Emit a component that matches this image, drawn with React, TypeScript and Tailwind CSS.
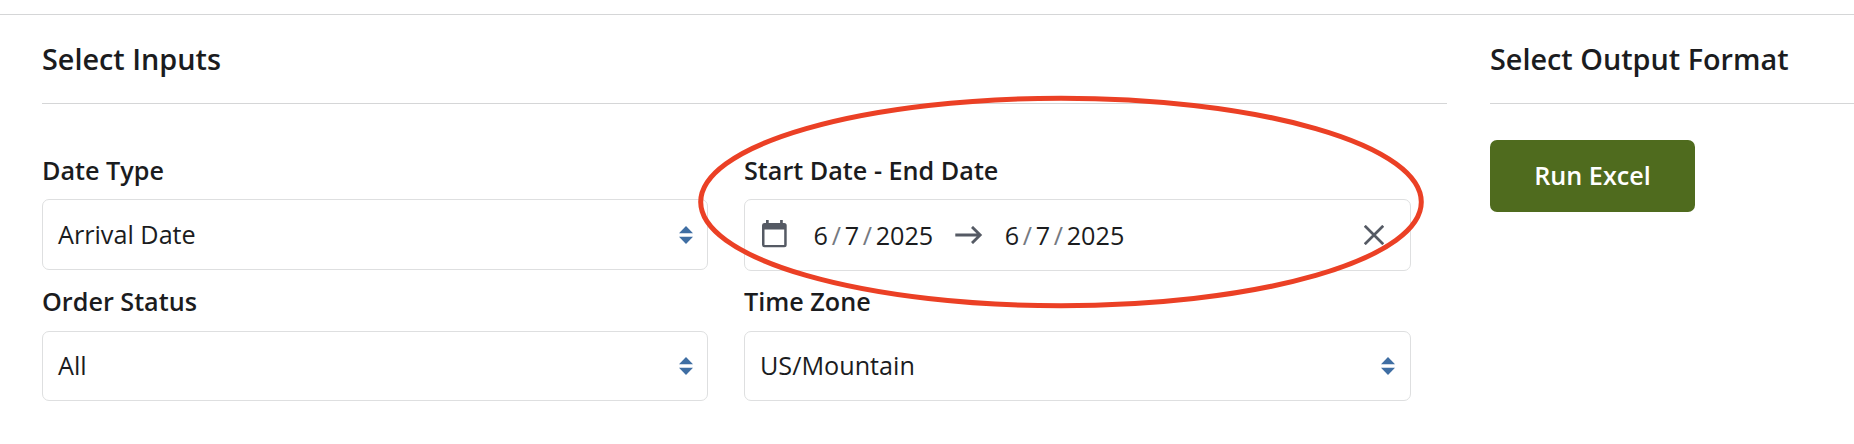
import React from "react";

function SortCaret({ className = "" }: { className?: string }) {
  return (
    <svg className={`h-[18px] w-[14px] shrink-0 ${className}`} viewBox="0 0 14 18" fill="#3f6ea3">
      <path d="M7 0L14 7.3H0Z" />
      <path d="M7 18L14 10.7H0Z" />
    </svg>
  );
}

function Label({ children }: { children: React.ReactNode }) {
  return <label className="block h-9 text-[25.2px] leading-9 font-semibold">{children}</label>;
}

interface SelectBoxProps {
  value: string;
  className: string;
  textClass?: string;
  caretClass?: string;
}

function SelectBox({ value, className, textClass = "pb-[2px]", caretClass }: SelectBoxProps) {
  return (
    <button
      type="button"
      className={`flex w-full items-center justify-between rounded-[7px] border border-[#dedfe0] pl-[15px] text-left text-[25.2px] leading-9 ${className}`}
    >
      <span className={textClass}>{value}</span>
      <SortCaret className={caretClass} />
    </button>
  );
}

function DateValue() {
  return (
    <span className="flex items-center gap-[3.7px]">
      <span>6</span>
      <span className="text-[#747980]">/</span>
      <span>7</span>
      <span className="text-[#747980]">/</span>
      <span>2025</span>
    </span>
  );
}

function DateRange() {
  return (
    <div className="mt-[11px] flex h-[72px] items-center rounded-[7px] border border-[#dedfe0] pr-[26px] pl-[17px] text-[25.2px] leading-9">
      <svg className="mb-[2px] h-7 w-[25px] shrink-0" viewBox="0 0 25 28">
        <path
          fill="#555a64"
          fillRule="evenodd"
          d="M4 0H6.7V3H18.1V0H20.8V3H22.2Q24.7 3 24.7 5.6V24.8Q24.7 27.3 22.2 27.3H2.5Q0 27.3 0 24.8V5.6Q0 3 2.5 3H4ZM2.5 9.4V25H22.2V9.4Z"
        />
      </svg>
      <div className="ml-[26.6px]">
        <DateValue />
      </div>
      <svg className="ml-[21.4px] h-[18px] w-[28px] shrink-0" viewBox="0 0 28 18" fill="none" stroke="#555a64" strokeWidth="2.8">
        <path d="M0.3 9H25.5M17 0.9L25.2 9L17 17.1" />
      </svg>
      <div className="ml-[22px]">
        <DateValue />
      </div>
      <svg className="ml-auto h-5 w-5 shrink-0" viewBox="0 0 20 20" fill="none" stroke="#555a64" strokeWidth="2.7">
        <path d="M0.8 0.8L19.2 19.2M19.2 0.8L0.8 19.2" />
      </svg>
    </div>
  );
}

export default function App() {
  return (
    <div className="relative h-[444px] w-[1854px] overflow-hidden bg-white pt-[14px] font-['Open_Sans',sans-serif] text-[#1b1c1e]">
      <div className="flex h-[430px] items-start gap-[43px] border-t border-[#d5d6d7] pl-[42px]">
        <section className="w-[1405px] shrink-0">
          <h2 className="h-[89px] border-b border-[#d5d6d7] pt-6 text-[28.8px] leading-10 font-semibold">Select Inputs</h2>
          <div className="grid grid-cols-[666px_667px] gap-x-9 pt-12">
            <div>
              <Label>Date Type</Label>
              <SelectBox value="Arrival Date" className="mt-[11px] h-[71px] pr-[14px]" textClass="pb-px" caretClass="mt-px" />
            </div>
            <div>
              <Label>Start Date - End Date</Label>
              <DateRange />
            </div>
            <div className="pt-3">
              <Label>Order Status</Label>
              <SelectBox value="All" className="mt-3 h-[70px] pr-[14px]" />
            </div>
            <div className="pt-3">
              <Label>Time Zone</Label>
              <SelectBox value="US/Mountain" className="mt-3 h-[70px] pr-[15px]" />
            </div>
          </div>
        </section>
        <section className="flex-1">
          <h2 className="h-[89px] border-b border-[#d5d6d7] pt-6 text-[28.8px] leading-10 font-semibold">Select Output Format</h2>
          <button type="button" className="mt-9 block h-[72px] w-[205px] rounded-[7px] bg-[#4f6b1e] pb-[2px] text-[25.2px] leading-9 font-semibold text-white">
            Run Excel
          </button>
        </section>
      </div>
      <svg className="pointer-events-none absolute top-[90px] left-[690px]" width="742" height="224" viewBox="690 90 742 224" fill="none">
        <ellipse cx="1061" cy="202" rx="360.3" ry="103.8" stroke="#eb4025" strokeWidth="5" />
      </svg>
    </div>
  );
}
